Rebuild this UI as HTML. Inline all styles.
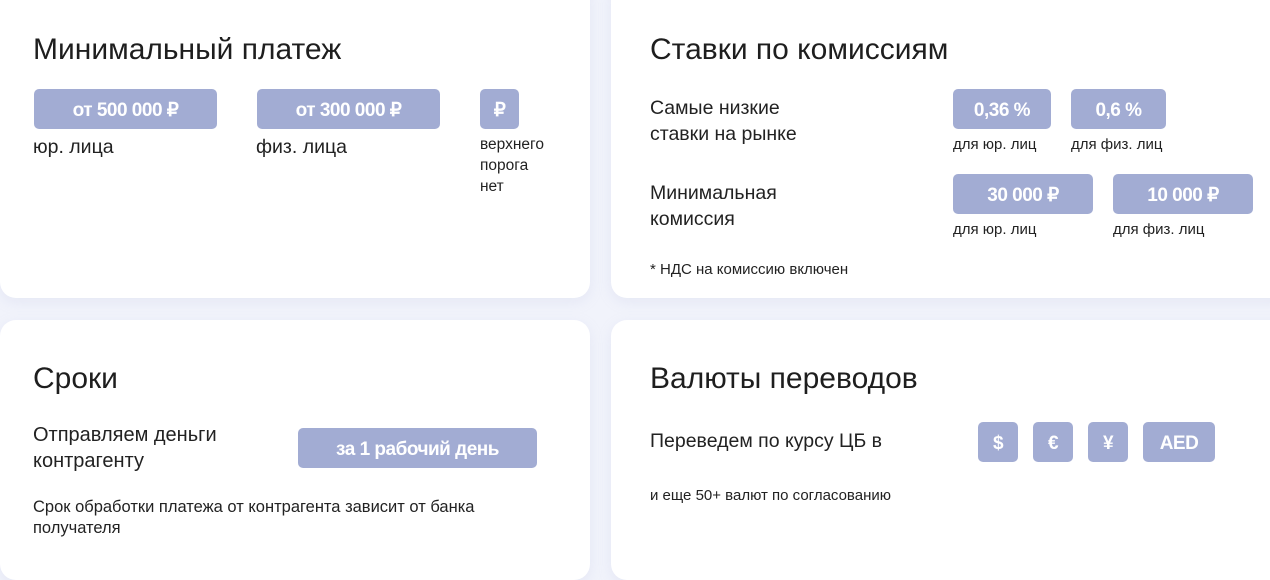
<!DOCTYPE html>
<html><head><meta charset="utf-8"><style>
*{margin:0;padding:0;box-sizing:border-box}
body{width:1270px;height:556px;background:#f1f3fb;font-family:"Liberation Sans",sans-serif;color:#222;position:relative;overflow:hidden}
.card{position:absolute;background:#fff;border-radius:16px;box-shadow:0 4px 14px rgba(160,170,210,.15)}
.t{position:absolute;white-space:nowrap}
.h{font-size:30px;color:#1e1e1e}
.b{position:absolute;background:#a2acd3;color:#fff;font-weight:bold;font-size:19px;border-radius:5px;display:flex;align-items:center;justify-content:center;letter-spacing:-.5px;padding-top:3px}
.l{font-size:19.5px;line-height:26px}
.s{font-size:15.5px;line-height:21px}
.x{font-size:15px}
</style></head><body>
<div class="card" style="left:0;top:-20px;width:590px;height:318px"></div>
<div class="card" style="left:611px;top:-20px;width:680px;height:318px"></div>
<div class="card" style="left:0;top:320px;width:590px;height:260px"></div>
<div class="card" style="left:611px;top:320px;width:680px;height:260px"></div>

<div class="t h" style="left:33px;top:33px">Минимальный платеж</div>
<div class="b" style="left:34px;top:89px;width:183px;height:40px">от 500 000 ₽</div>
<div class="b" style="left:257px;top:89px;width:183px;height:40px">от 300 000 ₽</div>
<div class="b" style="left:480px;top:89px;width:39px;height:40px">₽</div>
<div class="t l" style="left:33px;top:134px">юр. лица</div>
<div class="t l" style="left:256px;top:134px">физ. лица</div>
<div class="t s" style="left:480px;top:134px">верхнего<br>порога<br>нет</div>

<div class="t h" style="left:650px;top:33px">Ставки по комиссиям</div>
<div class="t l" style="left:650px;top:95px">Самые низкие<br>ставки на рынке</div>
<div class="b" style="left:953px;top:89px;width:98px;height:40px">0,36 %</div>
<div class="b" style="left:1071px;top:89px;width:95px;height:40px">0,6 %</div>
<div class="t x" style="left:953px;top:136px">для юр. лиц</div>
<div class="t x" style="left:1071px;top:136px">для физ. лиц</div>
<div class="t l" style="left:650px;top:180px">Минимальная<br>комиссия</div>
<div class="b" style="left:953px;top:174px;width:140px;height:40px">30 000 ₽</div>
<div class="b" style="left:1113px;top:174px;width:140px;height:40px">10 000 ₽</div>
<div class="t x" style="left:953px;top:221px">для юр. лиц</div>
<div class="t x" style="left:1113px;top:221px">для физ. лиц</div>
<div class="t x" style="left:650px;top:261px">* НДС на комиссию включен</div>

<div class="t h" style="left:33px;top:362px">Сроки</div>
<div class="t l" style="left:33px;top:422px;font-size:20px">Отправляем деньги<br>контрагенту</div>
<div class="b" style="left:298px;top:428px;width:239px;height:40px">за 1 рабочий день</div>
<div class="t s" style="left:33px;top:497px;font-size:16.5px">Срок обработки платежа от контрагента зависит от банка<br>получателя</div>

<div class="t h" style="left:650px;top:362px">Валюты переводов</div>
<div class="t l" style="left:650px;top:428px">Переведем по курсу ЦБ в</div>
<div class="b" style="left:978px;top:422px;width:40px;height:40px">$</div>
<div class="b" style="left:1033px;top:422px;width:40px;height:40px">€</div>
<div class="b" style="left:1088px;top:422px;width:40px;height:40px">¥</div>
<div class="b" style="left:1143px;top:422px;width:72px;height:40px">AED</div>
<div class="t x" style="left:650px;top:487px">и еще 50+ валют по согласованию</div>
</body></html>
